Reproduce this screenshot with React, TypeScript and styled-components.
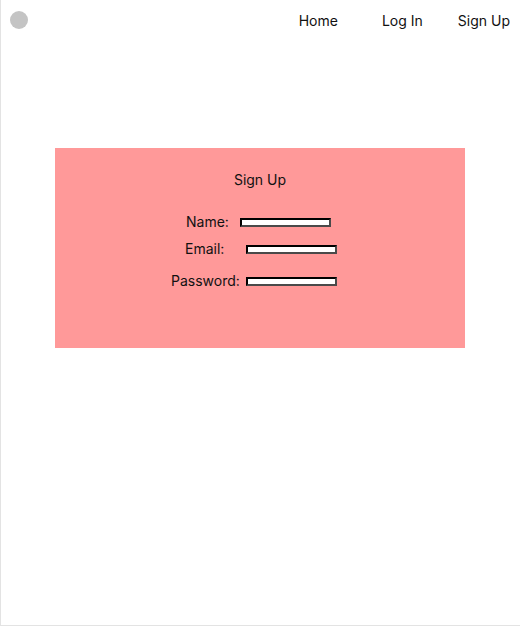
import React from "react";
import styled, { createGlobalStyle } from "styled-components";

const GlobalStyle = createGlobalStyle`
  body {
    margin: 0;
    background: #ffffff;
    font-family: Inter, "Noto Sans", sans-serif;
    color: #111111;
  }
`;

const Page = styled.div`
  width: 520px;
  min-height: 626px;
  box-sizing: border-box;
  border-left: 1px solid #e3e3e3;
  border-bottom: 1px solid #e3e3e3;
`;

const Header = styled.header`
  display: flex;
  align-items: center;
  justify-content: space-between;
  height: 40px;
  padding: 0 10px 0 9px;
`;

const Logo = styled.div`
  width: 18px;
  height: 18px;
  border-radius: 50%;
  background: #c4c4c4;
  margin-top: -1px;
`;

const Nav = styled.nav`
  display: flex;
  align-items: center;
  gap: 35px;
  margin-top: 1px;
`;

const NavLink = styled.a<{ $extra?: number }>`
  font-size: 14px;
  line-height: 20px;
  color: #111111;
  text-decoration: none;
  margin-right: ${(p) => p.$extra || 0}px;
`;

const Main = styled.main`
  padding-top: 108px;
`;

const Card = styled.section`
  width: 410px;
  height: 200px;
  margin-left: 54px;
  background: #ff9999;
  padding-top: 22px;
  box-sizing: border-box;
`;

const Title = styled.h2`
  margin: 0;
  font-size: 14px;
  font-weight: 400;
  line-height: 20px;
  text-align: center;
`;

const Row = styled.div<{ $left: number; $top: number; $gap: number }>`
  display: flex;
  align-items: center;
  height: 20px;
  margin-top: ${(p) => p.$top}px;
  padding-left: ${(p) => p.$left}px;
  gap: ${(p) => p.$gap}px;
`;

const Label = styled.label`
  font-size: 14px;
  line-height: 20px;
`;

const Field = styled.input`
  width: 91px;
  height: 9px;
  box-sizing: border-box;
  padding: 0;
  margin: 0;
  border: 2px inset #4a4a4a;
  border-top-color: #111111;
  border-left-color: #111111;
  background: #ffffff;
`;

export default function App() {
  return (
    <>
      <GlobalStyle />
      <Page>
        <Header>
          <Logo />
          <Nav>
            <NavLink href="#" $extra={9}>Home</NavLink>
            <NavLink href="#">Log In</NavLink>
            <NavLink href="#">Sign Up</NavLink>
          </Nav>
        </Header>
        <Main>
          <Card>
            <Title>Sign Up</Title>
            <Row $left={131} $top={22} $gap={11}>
              <Label>Name:</Label>
              <Field type="text" />
            </Row>
            <Row $left={130} $top={7} $gap={22}>
              <Label>Email:</Label>
              <Field type="email" />
            </Row>
            <Row $left={116} $top={12} $gap={6}>
              <Label>Password:</Label>
              <Field type="password" />
            </Row>
          </Card>
        </Main>
      </Page>
    </>
  );
}
